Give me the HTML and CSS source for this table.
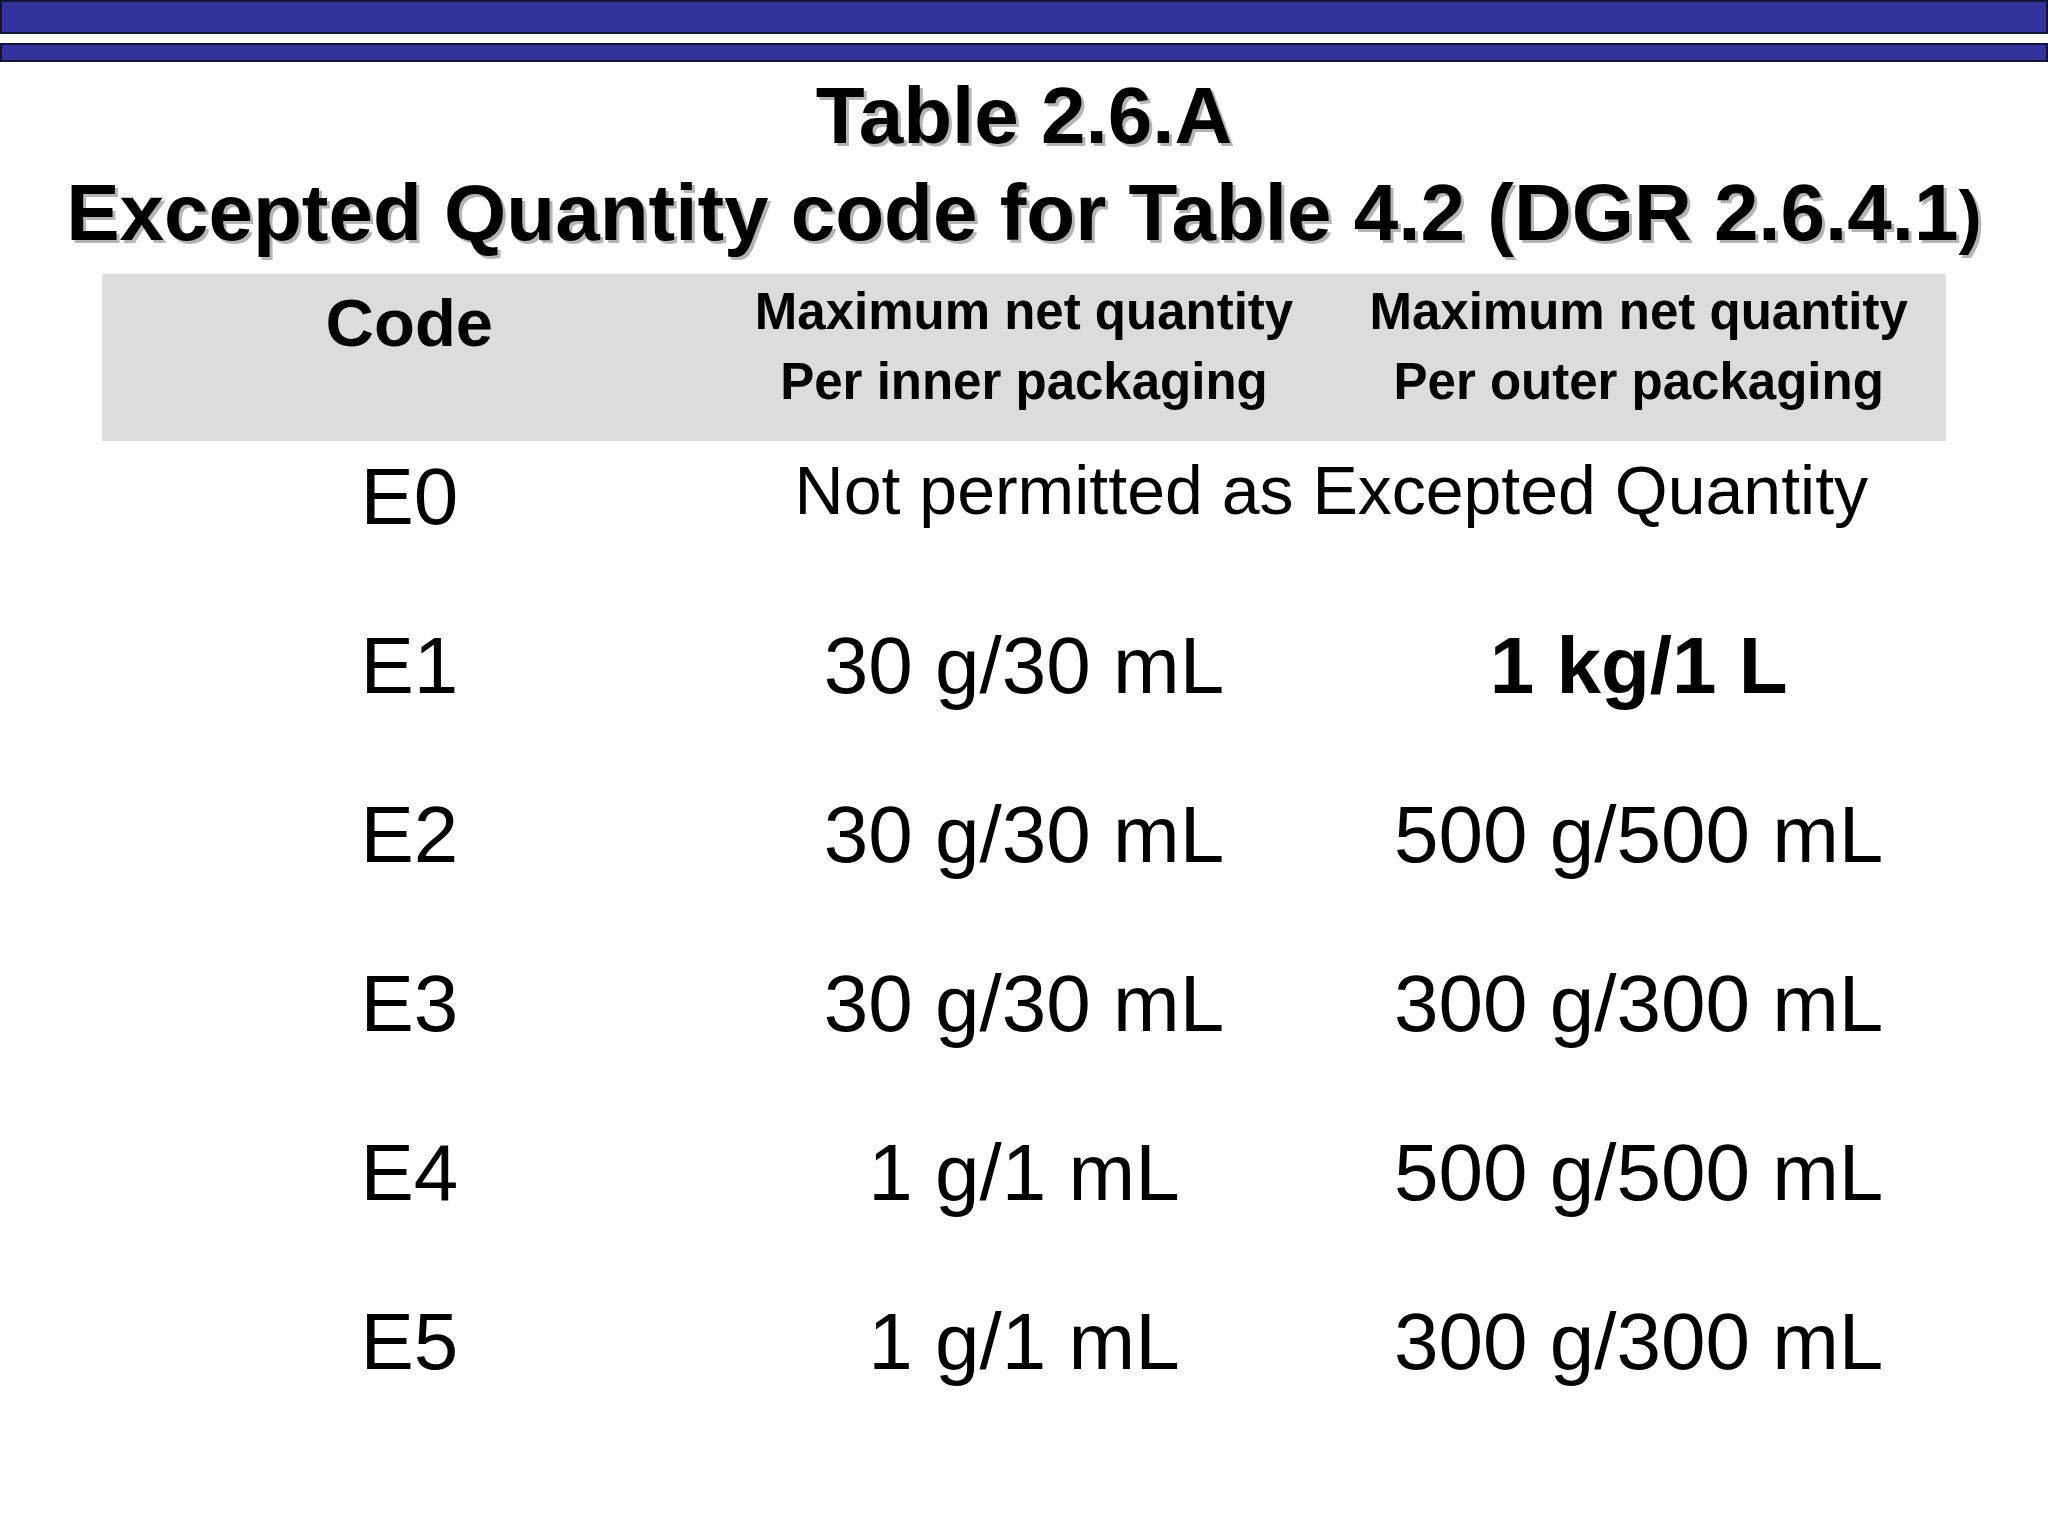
FILE: index.html
```html
<!DOCTYPE html>
<html lang="en">
<head>
<meta charset="utf-8">
<title>Table 2.6.A Excepted Quantity code</title>
<link rel="stylesheet" href="styles.css">
</head>
<body>
<div class="slide">
  <div class="bar bar-top"></div>
  <div class="bar bar-bottom"></div>
  <h1 class="title">
    <span class="title-line">Table 2.6.A</span>
    <span class="title-line">Excepted Quantity code for Table 4.2 (DGR 2.6.4.1<span class="paren">)</span></span>
  </h1>
  <table class="eq">
    <thead>
      <tr class="head">
        <th class="h-code">Code</th>
        <th class="h-qty">Maximum net quantity<br>Per inner packaging</th>
        <th class="h-qty">Maximum net quantity<br>Per outer packaging</th>
      </tr>
    </thead>
    <tbody>
      <tr class="row">
        <td>E0</td>
        <td class="span-note" colspan="2">Not permitted as Excepted Quantity</td>
      </tr>
      <tr class="row">
        <td>E1</td>
        <td>30 g/30 mL</td>
        <td class="strong">1 kg/1 L</td>
      </tr>
      <tr class="row">
        <td>E2</td>
        <td>30 g/30 mL</td>
        <td>500 g/500 mL</td>
      </tr>
      <tr class="row">
        <td>E3</td>
        <td>30 g/30 mL</td>
        <td>300 g/300 mL</td>
      </tr>
      <tr class="row">
        <td>E4</td>
        <td>1 g/1 mL</td>
        <td>500 g/500 mL</td>
      </tr>
      <tr class="row">
        <td>E5</td>
        <td>1 g/1 mL</td>
        <td>300 g/300 mL</td>
      </tr>
    </tbody>
  </table>
</div>
</body>
</html>
```
FILE: styles.css
```css
html, body {
  margin: 0;
  padding: 0;
  background: #ffffff;
}

body {
  font-family: "Liberation Sans", Arial, sans-serif;
  color: #000000;
}

.slide {
  width: 2048px;
  height: 1536px;
  overflow: hidden;
}

.bar {
  box-sizing: border-box;
  width: 100%;
  background: #333399;
  border: 2px solid #14143a;
}

.bar-top {
  height: 34px;
}

.bar-bottom {
  height: 19px;
  margin-top: 9px;
}

.title {
  margin: 5px 0 0;
  font-size: 80px;
  line-height: 97px;
  font-weight: bold;
  text-align: center;
  text-shadow: 3px 3px 0 #b4b4b4;
}

.title-line {
  display: block;
}

.paren {
  font-size: 70px;
  line-height: 70px;
}

.eq {
  width: 1844px;
  margin: 13px auto 0;
  border-collapse: collapse;
  border-spacing: 0;
  table-layout: fixed;
}

.head {
  height: 167px;
  background: #dddbdc;
}

.head th {
  vertical-align: top;
  text-align: center;
  font-weight: bold;
  padding: 0;
}

.h-code {
  font-size: 67px;
  line-height: 77px;
  padding-top: 10px !important;
}

.h-qty {
  font-size: 51px;
  line-height: 70px;
  padding-top: 3px !important;
}

.row {
  height: 169px;
}

.row td {
  vertical-align: top;
  text-align: center;
  padding: 10px 0 0;
  font-size: 80px;
  line-height: 92px;
}

.row td.span-note {
  font-size: 68px;
  line-height: normal;
}

.row td.strong {
  font-weight: bold;
}
```
